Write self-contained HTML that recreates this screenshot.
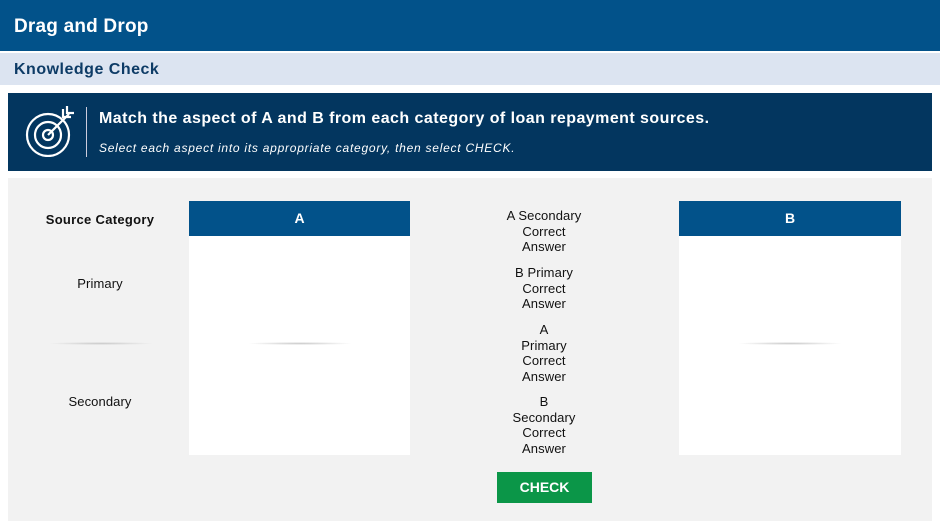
<!DOCTYPE html>
<html><head><style>
*{margin:0;padding:0;box-sizing:border-box}
body{width:940px;height:528px;background:#fff;font-family:"Liberation Sans",Arial,sans-serif;position:relative;overflow:hidden}
.abs{position:absolute}
.hdr{left:0;top:0;width:940px;height:51px;background:#02528a;color:#fff;font-weight:bold;font-size:19px;padding:16px 0 0 14px;letter-spacing:0.2px}
.kc{left:0;top:53px;width:940px;height:32px;background:#dce4f1;color:#0d3b66;font-weight:bold;font-size:16px;padding:8px 0 0 14px;letter-spacing:0.5px}
.ban{left:8px;top:93px;width:924px;height:78px;background:#03365f;color:#fff}
.gray{left:8px;top:178px;width:924px;height:343px;background:#f2f2f2}
.col{background:#fff}
.colh{height:35px;background:#02528a;color:#fff;font-weight:bold;font-size:14px;text-align:center;line-height:35px}
.t{font-size:13px;color:#111;text-align:center;letter-spacing:0.1px}
.sh{height:3px;background:radial-gradient(ellipse at center,#c8c8c8 0%,rgba(200,200,200,0) 70%)}
</style></head><body>
<div class="abs hdr">Drag and Drop</div>
<div class="abs kc">Knowledge Check</div>
<div class="abs ban">
<svg class="abs" style="left:17px;top:12px" width="52" height="52" viewBox="0 0 52 52" fill="none" stroke="#fff" stroke-width="2.2">
<circle cx="23" cy="30" r="21"/><circle cx="23" cy="30" r="13"/><circle cx="23" cy="30" r="5"/>
<path d="M23 30 L44 9 M38 4 L38 12 L46 12 M42 1 L42 8 L49 8"/></svg>
<div class="abs" style="left:78px;top:14px;width:1px;height:50px;background:#ccd"></div>
<div class="abs" style="left:91px;top:17px;font-weight:bold;font-size:16px;letter-spacing:0.45px">Match the aspect of A and B from each category of loan repayment sources.</div>
<div class="abs" style="left:91px;top:48px;font-style:italic;font-size:12px;letter-spacing:0.75px">Select each aspect into its appropriate category, then select CHECK.</div>
</div>
<div class="abs gray"></div>
<div class="abs t" style="left:40px;top:212px;width:120px;font-weight:bold;letter-spacing:0.3px">Source Category</div>
<div class="abs t" style="left:40px;top:276px;width:120px">Primary</div>
<div class="abs sh" style="left:48px;top:342px;width:106px"></div>
<div class="abs t" style="left:40px;top:394px;width:120px">Secondary</div>
<div class="abs col" style="left:189px;top:201px;width:221px;height:254px"><div class="colh">A</div>
<div class="sh" style="margin:106px auto 0;width:106px"></div></div>
<div class="abs col" style="left:679px;top:201px;width:222px;height:254px"><div class="colh">B</div>
<div class="sh" style="margin:106px auto 0;width:106px"></div></div>
<div class="abs t" style="left:494px;top:208px;width:100px;line-height:15.5px">A Secondary<br>Correct<br>Answer</div>
<div class="abs t" style="left:494px;top:265px;width:100px;line-height:15.5px">B Primary<br>Correct<br>Answer</div>
<div class="abs t" style="left:494px;top:322px;width:100px;line-height:15.5px">A<br>Primary<br>Correct<br>Answer</div>
<div class="abs t" style="left:494px;top:394px;width:100px;line-height:15.5px">B<br>Secondary<br>Correct<br>Answer</div>
<div class="abs" style="left:497px;top:472px;width:95px;height:31px;background:#0b9648;color:#fff;font-weight:bold;font-size:14px;text-align:center;line-height:31px">CHECK</div>
</body></html>
